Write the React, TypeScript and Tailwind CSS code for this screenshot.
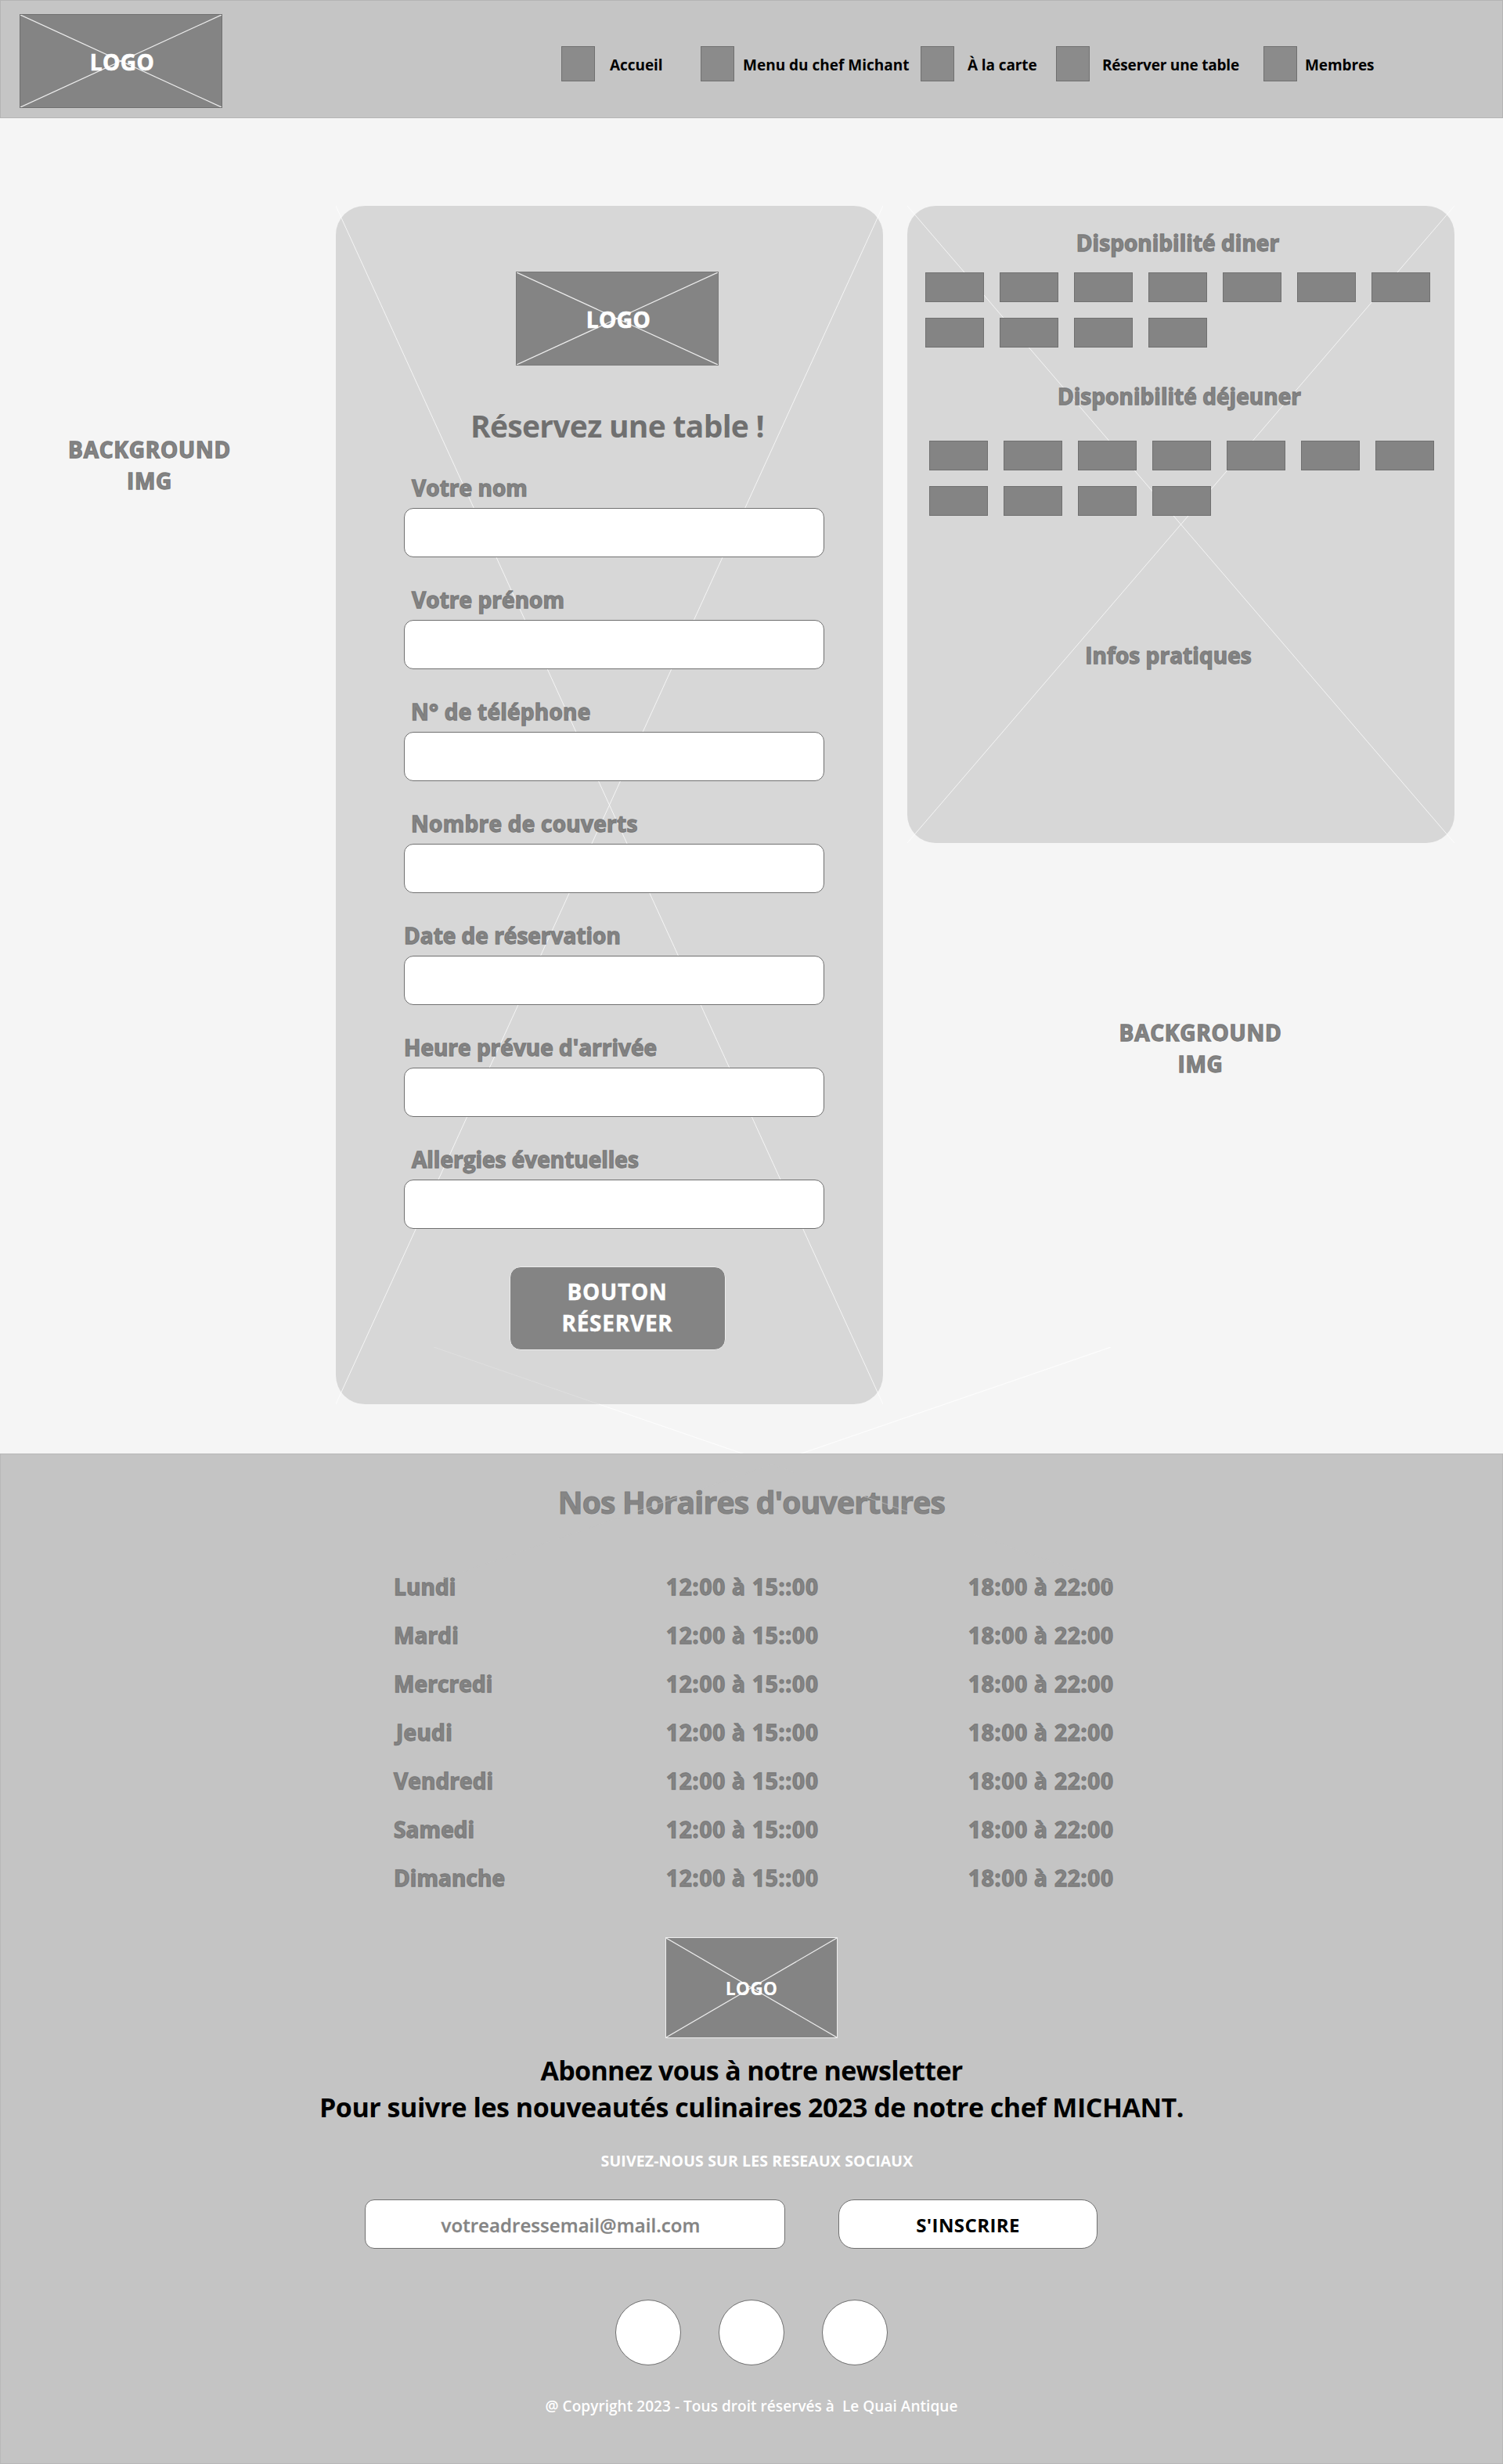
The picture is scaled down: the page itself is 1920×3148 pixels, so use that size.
import type { ReactNode } from "react";

const outline = "text-[#848484] [-webkit-text-stroke:1.3px_#7b7b7b]";

function Cross({ opacity = 0.75, width = 1 }: { opacity?: number; width?: number }) {
  return (
    <svg className="pointer-events-none absolute inset-0 h-full w-full" preserveAspectRatio="none" aria-hidden="true">
      <line x1="0" y1="0" x2="100%" y2="100%" stroke="#fff" strokeOpacity={opacity} strokeWidth={width} />
      <line x1="100%" y1="0" x2="0" y2="100%" stroke="#fff" strokeOpacity={opacity} strokeWidth={width} />
    </svg>
  );
}

function Logo({ className, label }: { className: string; label: string }) {
  return (
    <div className={`relative flex shrink-0 items-center justify-center bg-[#848484] ${className}`}>
      <Cross opacity={0.85} width={1.2} />
      <span className={`relative text-white ${label}`}>LOGO</span>
    </div>
  );
}

const nav = [
  { label: "Accueil", box: "w-[178px] gap-[19px]", text: "tracking-[-0.05px]" },
  { label: "Menu du chef Michant", box: "w-[281px] gap-[11px]", text: "tracking-[0px]" },
  { label: "À la carte", box: "w-[173px] gap-[17px]", text: "tracking-[-0.1px]" },
  { label: "Réserver une table", box: "w-[265px] gap-[16px]", text: "tracking-[-0.2px]" },
  { label: "Membres", box: "gap-[10px]", text: "tracking-[-0.1px]" },
];

function Header() {
  return (
    <header className="flex h-[151px] border border-[#b4b4b4] bg-[#c5c5c5]">
      <Logo className="ml-6 mt-[17px] h-[120px] w-[259px] border border-[#707070]" label="pl-[3px] pt-0.5 text-[28px] tracking-[0.4px] [-webkit-text-stroke:0.7px_#fff]" />
      <nav className="ml-[433px] mt-[58px] flex h-[45px]">
        {nav.map((item) => (
          <a key={item.label} className={`flex items-center ${item.box}`}>
            <span className="h-[45px] w-[43px] shrink-0 border border-[#707070] bg-[#8b8b8b]" />
            <span className={`whitespace-nowrap pt-[3px] text-[19px] leading-7 text-black ${item.text}`}>{item.label}</span>
          </a>
        ))}
      </nav>
    </header>
  );
}

const fields = [
  { label: "Votre nom", text: "pl-2.5 tracking-[0.05px]" },
  { label: "Votre prénom", text: "pl-2.5 tracking-[0.05px]" },
  { label: "N° de téléphone", text: "pl-[9px] tracking-[0.25px]" },
  { label: "Nombre de couverts", text: "pl-[9px] tracking-[0.27px]" },
  { label: "Date de réservation", text: "tracking-[0px]" },
  { label: "Heure prévue d'arrivée", text: "tracking-[0px]" },
  { label: "Allergies éventuelles", text: "pl-2.5 tracking-[0px]" },
];

function BookingCard() {
  return (
    <section className="relative mt-28 flex h-[1531px] w-[699px] shrink-0 flex-col items-center rounded-[37px] bg-[#d7d7d7] pl-5 pt-[84px]">
      <Cross />
      <Logo className="h-[120px] w-[259px] border border-[#787878]" label="pl-[3px] pt-0.5 text-[28px] tracking-[0.4px] [-webkit-text-stroke:0.7px_#fff]" />
      <h1 className="relative mt-[53px] text-[39px] leading-[48px] tracking-[-0.7px] text-[#707070]">Réservez une table !</h1>
      <div className="relative ml-[67px] mt-[35px] flex flex-col gap-[34px] self-start">
        {fields.map((f) => (
          <label key={f.label} className="flex flex-col gap-1.5">
            <span className={`text-[28px] leading-10 ${outline} ${f.text}`}>{f.label}</span>
            <input className="h-[63px] w-[537px] rounded-[12px] border border-[#707070] bg-white px-4 outline-none" />
          </label>
        ))}
      </div>
      <button className="relative mt-12 flex h-[107px] w-[276px] flex-col items-center justify-center rounded-[14px] border border-[#ececec] bg-[#848484] pb-1 text-[28px] leading-10 tracking-[0.75px] text-white [-webkit-text-stroke:0.4px_#fff]">
        <span>BOUTON</span>
        <span>RÉSERVER</span>
      </button>
    </section>
  );
}

function Slots({ className }: { className: string }) {
  return (
    <div className={`relative grid grid-cols-[repeat(7,75px)] gap-5 ${className}`}>
      {Array.from({ length: 11 }, (_, i) => (
        <span key={i} className="h-[38px] border border-[#707070] bg-[#848484]" />
      ))}
    </div>
  );
}

function CardTitle({ className, children }: { className: string; children: ReactNode }) {
  return <h2 className={`relative text-center text-[28px] leading-10 tracking-[0.05px] ${outline} ${className}`}>{children}</h2>;
}

function AvailabilityCard() {
  return (
    <section className="relative h-[814px] rounded-[36px] bg-[#d7d7d7] pt-[27px]">
      <Cross />
      <CardTitle className="pr-2">Disponibilité diner</CardTitle>
      <Slots className="mt-[18px] pl-[23px]" />
      <CardTitle className="mt-[42px] pr-1">Disponibilité déjeuner</CardTitle>
      <Slots className="mt-[37px] pl-7" />
      <CardTitle className="mt-[158px] pr-8">Infos pratiques</CardTitle>
    </section>
  );
}

function BackgroundLabel({ className }: { className: string }) {
  return (
    <p className={`text-center text-[28px] leading-10 tracking-[0.75px] ${outline} ${className}`}>
      BACKGROUND
      <br />
      IMG
    </p>
  );
}

function Main() {
  return (
    <main className="relative flex h-[1706px] overflow-hidden bg-[#f5f5f5]">
      <div className="w-[429px] shrink-0">
        <BackgroundLabel className="mt-[403px] w-[382px]" />
      </div>
      <BookingCard />
      <div className="ml-[31px] mt-28 flex w-[699px] flex-col">
        <AvailabilityCard />
        <BackgroundLabel className="mt-[222px] pl-[50px]" />
      </div>
      <svg className="pointer-events-none absolute bottom-0 left-[554px] h-[136px] w-[865px]" viewBox="0 0 865 136" aria-hidden="true">
        <line x1="0" y1="0" x2="211" y2="73" stroke="#fff" strokeOpacity="0.2" />
        <line x1="211" y1="73" x2="432" y2="149" stroke="#fff" strokeOpacity="0.75" strokeWidth="1.2" />
        <line x1="865" y1="0" x2="432" y2="149" stroke="#fff" strokeOpacity="0.75" strokeWidth="1.2" />
      </svg>
    </main>
  );
}

const days = ["Lundi", "Mardi", "Mercredi", "Jeudi", "Vendredi", "Samedi", "Dimanche"];

function Footer() {
  return (
    <footer className="relative flex h-[1291px] flex-col items-center border border-[#b8b8b8] bg-[#c4c4c4] pt-[37px]">
      <h2 className="text-[39px] leading-[48px] tracking-[-0.75px] text-[#868686] [-webkit-text-stroke:1px_#7c7c7c]">Nos Horaires d'ouvertures</h2>
      <svg className="pointer-events-none absolute left-[553px] top-0 h-[163px] w-[865px]" viewBox="0 136 865 163" aria-hidden="true">
        <line x1="0" y1="299" x2="432" y2="149" stroke="#c4c4c4" strokeOpacity="0.7" />
        <line x1="865" y1="299" x2="432" y2="149" stroke="#c4c4c4" strokeOpacity="0.7" />
      </svg>
      <div className={`mt-16 flex flex-col gap-[22px] self-start pl-[502px] text-[28px] leading-10 ${outline}`}>
        {days.map((day) => (
          <div key={day} className="grid grid-cols-[348px_386px_200px]">
            <span className={day === "Jeudi" ? "pl-[3px] tracking-[0.3px]" : "tracking-[0.1px]"}>{day}</span>
            <span className="tracking-[0.8px]">12:00 à 15::00</span>
            <span className="tracking-[0.8px]">18:00 à 22:00</span>
          </div>
        ))}
      </div>
      <Logo className="mt-14 h-[129px] w-[220px] border border-[#ededed]" label="pt-px text-[23px] tracking-[0px]" />
      <p className="mt-[18px] text-center text-[34px] leading-[47px] text-black">
        <span className="tracking-[-0.69px]">Abonnez vous à notre newsletter</span>
        <br />
        <span className="tracking-[-0.48px]">Pour suivre les nouveautés culinaires 2023 de notre chef MICHANT.</span>
      </p>
      <p className="mt-[31px] pl-3.5 text-[19.5px] leading-7 tracking-[0.13px] text-white">SUIVEZ-NOUS SUR LES RESEAUX SOCIAUX</p>
      <form className="ml-[465px] mt-[35px] flex gap-[68px] self-start">
        <div className="flex h-[63px] w-[537px] items-center justify-center rounded-[12px] border border-[#707070] bg-white pr-[11px] pt-0.5 text-2xl font-semibold tracking-[0.06px] text-[#848484] [-webkit-text-stroke:0.3px_#848484]">
          votreadressemail@mail.com
        </div>
        <button type="button" className="flex h-[63px] w-[331px] items-center justify-center rounded-[20px] border border-[#707070] bg-white pt-0.5 text-2xl tracking-[0.4px] text-black">
          S'INSCRIRE
        </button>
      </form>
      <div className="mt-[65px] flex gap-12">
        {[0, 1, 2].map((i) => (
          <span key={i} className="size-[84px] rounded-full border border-[#707070] bg-white" />
        ))}
      </div>
      <p className="mt-[38px] whitespace-pre text-[19px] font-semibold leading-7 tracking-[0.05px] text-white">@ Copyright 2023 - Tous droit réservés à  Le Quai Antique</p>
    </footer>
  );
}

export default function App() {
  return (
    <div className="w-[1920px] font-['Open_Sans','Noto_Sans',sans-serif] font-bold">
      <Header />
      <Main />
      <Footer />
    </div>
  );
}
